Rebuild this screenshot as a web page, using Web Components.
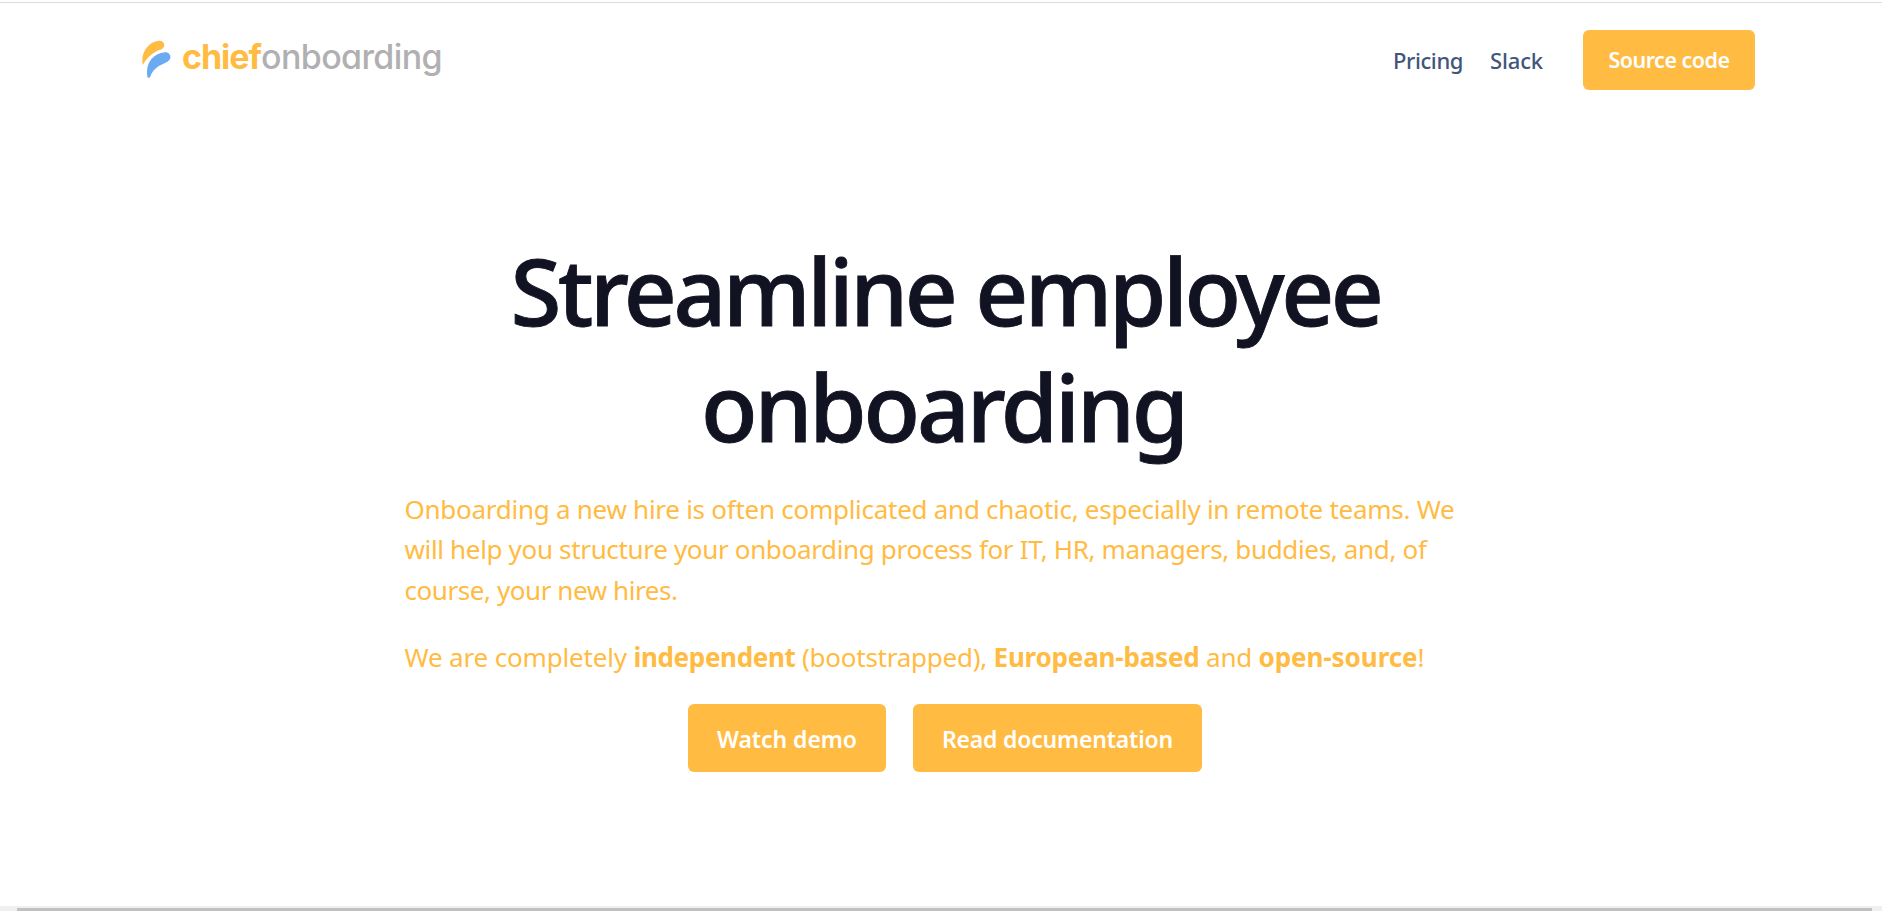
<!DOCTYPE html>
<html lang="en">
<head>
<meta charset="utf-8">
<title>ChiefOnboarding</title>
<style>
html,body{margin:0;height:100%;overflow:hidden;background:#fff}
body{font-family:"Noto Sans","Open Sans",sans-serif}
</style>
</head>
<body>
<landing-page></landing-page>
<script>
const define=(name,html,after)=>customElements.define(name,class extends HTMLElement{
  connectedCallback(){
    if(this.shadowRoot)return;
    const t=document.createElement('template');t.innerHTML=html;
    this.attachShadow({mode:'open'}).append(t.content.cloneNode(true));
    if(after)after.call(this);
  }
});

/* A single line of text, tracked so that it fills its measure. */
define('text-run',`<style>
:host{display:block;width:max-content;flex:none;white-space:pre}
</style><slot></slot>`,function(){
  const w=parseFloat(this.getAttribute('measure'));
  if(!w)return;
  const n=this.textContent.length,natural=this.getBoundingClientRect().width;
  this.style.letterSpacing=((w-natural)/n).toFixed(4)+'px';
  this.style.width=w+'px';
});

define('brand-logo',`<style>
:host{display:flex;align-items:flex-start;height:50px;font-family:Inter,sans-serif;font-feature-settings:"cv11";font-size:34px;line-height:54px}
svg{width:30px;height:40px;margin:9px 11px 0 0;flex:none}
.a{color:#ffbb42;font-weight:700}.b{color:#b0b0b2;font-weight:450}
</style>
<svg viewBox="0 0 30 40"><path d="M1.800 26C-.8 14 7 3 18 1.800c4-.2 6.300 3 4.800 6.200C21.500 10.500 19 10.500 16 12 10 15 5 19.500 1.800 26Z" fill="#ffbb42"/><path d="M6.600 38.800C4 26 10 15 24 13.200c4-.4 6.300 3.300 5 6.700C27.800 22.500 25.500 23 22 25 16 27.500 11.500 31 9 38.500Z" fill="#6aaaf2"/></svg>
<text-run class="a" measure="79">chief</text-run><text-run class="b" measure="181">onboarding</text-run>`);

define('nav-link',`<style>
:host{display:block;color:#42567c;font-size:22px;font-weight:500;line-height:30px}
</style><slot></slot>`);

define('action-button',`<style>
:host{display:flex;flex:none;box-sizing:border-box;align-items:center;justify-content:center;background:#ffbb42;color:#fff;border-radius:6px;font-weight:600;white-space:nowrap;line-height:1}
:host([size=nav]){width:172px;height:60px;font-size:21.500px}
:host([size=watch]){width:198px;height:68px;font-size:23px}
:host([size=read]){width:289px;height:68px;font-size:23px}
slot{display:block;padding-top:3px}
:host([size=nav]) slot{padding-top:0}
</style><slot></slot>`);

define('site-header',`<style>
:host{display:flex;box-sizing:border-box;height:90px;padding:27px 127px 0 141px;align-items:flex-start;justify-content:space-between}
nav{display:flex;align-items:center}
.s{margin-left:27px}action-button{margin-left:40px}
</style>
<brand-logo></brand-logo>
<nav><nav-link><text-run measure="70">Pricing</text-run></nav-link><nav-link class="s"><text-run measure="53">Slack</text-run></nav-link><action-button size="nav"><text-run measure="121">Source code</text-run></action-button></nav>`);

define('hero-section',`<style>
:host{display:flex;flex-direction:column;align-items:center;flex:1;padding-top:139px}
h1{display:flex;flex-direction:column;align-items:center;margin:0;padding-left:9px;color:#111322;font-size:92.500px;font-weight:500;line-height:116px;-webkit-text-stroke:.9px #111322}
.second{margin-right:4px}
.copy{width:1081px;margin-top:24.700px;color:#ffbb42;font-size:26px;line-height:40.500px}
p{margin:0 0 26.500px 4px}.mix{display:flex}
.mix b{font-weight:700}
.cta{display:flex;gap:27px;padding-left:8px}
</style>
<h1><text-run measure="870">Streamline employee</text-run><text-run class="second" measure="485">onboarding</text-run></h1>
<div class="copy">
<p><text-run measure="1050">Onboarding a new hire is often complicated and chaotic, especially in remote teams. We</text-run><text-run measure="1022">will help you structure your onboarding process for IT, HR, managers, buddies, and, of</text-run><text-run measure="273">course, your new hires.</text-run></p>
<p class="mix"><text-run measure="229">We are completely </text-run><b><text-run measure="162">independent</text-run></b><text-run measure="198"> (bootstrapped), </text-run><b><text-run measure="206">European-based</text-run></b><text-run measure="59"> and </text-run><b><text-run measure="159">open-source</text-run></b><text-run measure="8">!</text-run></p>
</div>
<div class="cta"><action-button size="watch"><text-run measure="140">Watch demo</text-run></action-button><action-button size="read"><text-run measure="231">Read documentation</text-run></action-button></div>`);

define('scroll-track',`<style>
:host{display:block;box-sizing:border-box;height:5px;background:#f0f0f0;padding:2px 10px 0 17px}
div{height:3px;background:#c1c1c1}
</style><div></div>`);

define('landing-page',`<style>
:host{display:flex;flex-direction:column;height:100vh;box-sizing:border-box;padding-top:2px}
.rule{height:1px;background:#dcdcdc;flex:none}
</style>
<div class="rule"></div><site-header></site-header><hero-section></hero-section><scroll-track></scroll-track>`);
</script>
</body>
</html>
